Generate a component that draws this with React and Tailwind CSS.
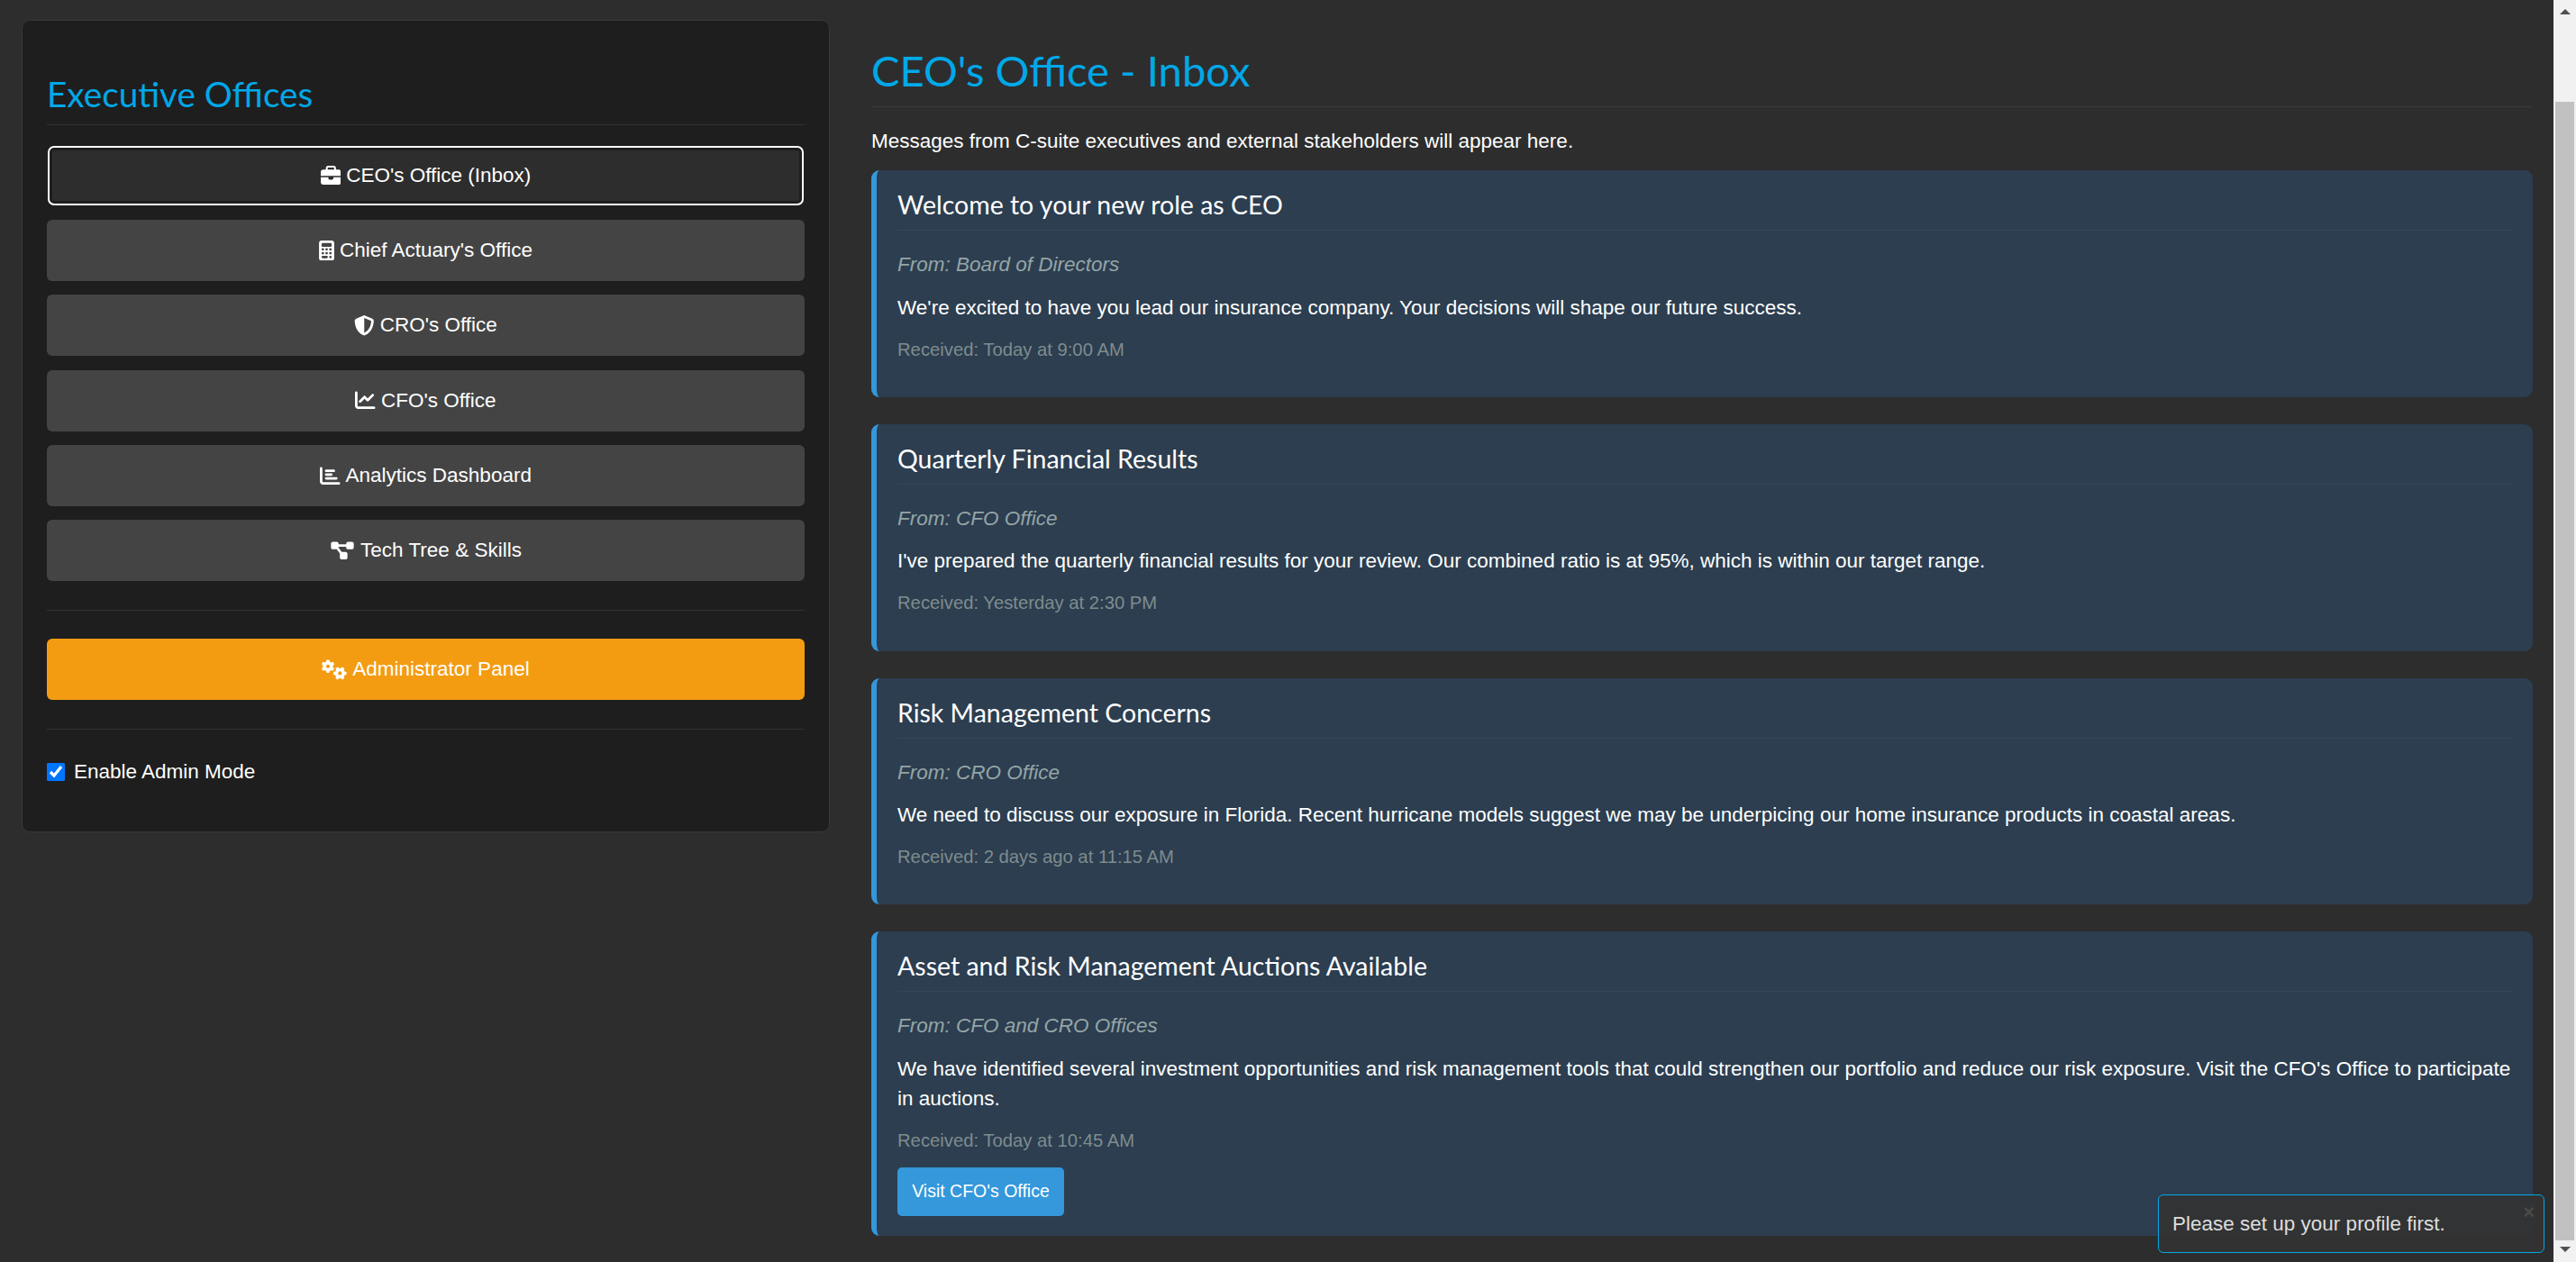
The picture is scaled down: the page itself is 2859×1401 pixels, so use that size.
import { FaBriefcase, FaCalculator, FaShieldHalved, FaChartLine, FaChartBar, FaDiagramProject, FaGears } from 'react-icons/fa6';

const offices = [
  { label: "CEO's Office (Inbox)", icon: FaBriefcase, iconClass: 'h-[22.5px] w-[22.5px]', active: true },
  { label: "Chief Actuary's Office", icon: FaCalculator, iconClass: 'h-[22.5px] w-[17px]' },
  { label: "CRO's Office", icon: FaShieldHalved, iconClass: 'h-[22.5px] w-[22.5px]' },
  { label: "CFO's Office", icon: FaChartLine, iconClass: 'h-[22.5px] w-[22.5px]' },
  { label: 'Analytics Dashboard', icon: FaChartBar, iconClass: 'h-[22.5px] w-[22.5px]' },
  { label: 'Tech Tree & Skills', icon: FaDiagramProject, iconClass: 'h-[22.5px] w-[28px]' },
];

const messages = [
  {
    title: 'Welcome to your new role as CEO',
    from: 'From: Board of Directors',
    body: "We're excited to have you lead our insurance company. Your decisions will shape our future success.",
    received: 'Received: Today at 9:00 AM',
  },
  {
    title: 'Quarterly Financial Results',
    from: 'From: CFO Office',
    body: "I've prepared the quarterly financial results for your review. Our combined ratio is at 95%, which is within our target range.",
    received: 'Received: Yesterday at 2:30 PM',
  },
  {
    title: 'Risk Management Concerns',
    from: 'From: CRO Office',
    body: 'We need to discuss our exposure in Florida. Recent hurricane models suggest we may be underpicing our home insurance products in coastal areas.',
    received: 'Received: 2 days ago at 11:15 AM',
  },
  {
    title: 'Asset and Risk Management Auctions Available',
    from: 'From: CFO and CRO Offices',
    body: "We have identified several investment opportunities and risk management tools that could strengthen our portfolio and reduce our risk exposure. Visit the CFO's Office to participate in auctions.",
    received: 'Received: Today at 10:45 AM',
    action: "Visit CFO's Office",
  },
];

function OfficeButton({ label, icon: Icon, iconClass, active }) {
  return (
    <button
      className={
        active
          ? 'mx-px mb-[16px] flex h-[66px] items-center justify-center gap-[6px] rounded-[7px] border-[2px] border-white bg-[#2d2d2d] text-white shadow-[inset_0_0_0_3px_#1e1e1e]'
          : 'mb-[15.25px] flex h-[68px] items-center justify-center gap-[6px] rounded-[6px] bg-[#444444] text-white'
      }
    >
      <Icon className={iconClass} />
      {label}
    </button>
  );
}

function MessageCard({ title, from, body, received, action }) {
  return (
    <div className="mb-[30px] rounded-[9px] border-l-[6px] border-[#3498db] bg-[#2c3e50] pt-[21px] pr-[22px] pb-[23.75px] pl-[23px]">
      <h5 className="mb-[21px] border-b border-[#364759] pb-[11px] font-['Lato',sans-serif] text-[28.5px] leading-[34px] text-white">{title}</h5>
      <p className="mb-[14px] leading-[33.75px] text-[#95a5a6] italic">{from}</p>
      <p className="mb-[15px] leading-[33px] text-white">{body}</p>
      <p className="mb-[14px] text-[20.25px] leading-[30.4px] text-[#7f8c8d]">{received}</p>
      {action && (
        <button className="-mb-px h-[54px] w-[185px] rounded-[5px] bg-[#3498db] text-[19.5px] text-white">{action}</button>
      )}
    </div>
  );
}

export default function App() {
  return (
    <div className="relative flex h-screen overflow-hidden bg-[#2d2d2d] font-['Liberation_Sans',sans-serif] text-[22.5px] text-white">
      <div className="flex min-w-0 flex-1 items-start gap-[46px] pt-[22px] pr-[23px] pl-[24px]">
        {/* sidebar */}
        <aside className="w-[897px] shrink-0 rounded-[9px] border border-[#383838] bg-[#1e1e1e] px-[27px] pt-[57px] pb-[49px]">
          <h3 className="mb-[23px] border-b border-[#333333] pb-[10px] font-['Lato',sans-serif] text-[38.7px] leading-[48px] text-[#00a8e8]">Executive Offices</h3>
          <div className="flex flex-col">
            {offices.map((o) => (
              <OfficeButton key={o.label} {...o} />
            ))}
          </div>
          <hr className="mt-[17px] mb-[31px] border-[#333333]" />
          <button className="flex h-[68px] w-full items-center justify-center gap-[6px] rounded-[6px] bg-[#f39c12] text-white">
            <FaGears className="h-[22.5px] w-[28px]" />
            Administrator Panel
          </button>
          <hr className="mt-[32px] mb-[30px] border-[#333333]" />
          <label className="flex h-[34px] items-center gap-[10px]">
            <input type="checkbox" defaultChecked className="size-[20px] accent-[#0075ff]" />
            Enable Admin Mode
          </label>
        </aside>

        {/* inbox */}
        <main className="min-w-0 flex-1">
          <h2 className="mt-[27px] mb-[21px] border-b border-[#3a3a3a] pb-[11px] font-['Lato',sans-serif] text-[47.2px] leading-[58px] text-[#00a8e8]">CEO's Office - Inbox</h2>
          <p className="mb-[15px] leading-[33.75px]">Messages from C-suite executives and external stakeholders will appear here.</p>
          {messages.map((m) => (
            <MessageCard key={m.title} {...m} />
          ))}
        </main>
      </div>

      {/* scrollbar */}
      <div className="flex w-[25px] shrink-0 flex-col items-center bg-[#f1f1f1] pt-[10px] pb-[11px]">
        <div className="h-0 w-0 border-x-[6px] border-b-[6px] border-x-transparent border-b-[#505050]" />
        <div className="mt-[97px] mb-[7px] w-[21px] flex-1 bg-[#c1c1c1]" />
        <div className="h-0 w-0 border-x-[6px] border-t-[6px] border-x-transparent border-t-[#505050]" />
      </div>

      {/* toast */}
      <div className="absolute top-[1326px] left-[2395px] flex h-[65px] w-[429px] items-center rounded-[6px] border border-[#00a8e8] bg-[#333333]/95 pl-[15px] text-[#dddddd]">
        Please set up your profile first.
        <span className="absolute top-[2px] right-[10px] text-[22px] font-bold text-[#4a4a4a]">×</span>
      </div>
    </div>
  );
}
